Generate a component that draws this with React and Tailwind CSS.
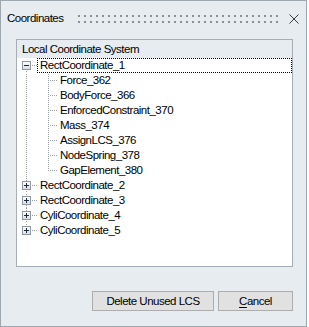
import React from "react";

const tree = [
  {
    name: "RectCoordinate_1",
    open: true,
    children: [
      "Force_362",
      "BodyForce_366",
      "EnforcedConstraint_370",
      "Mass_374",
      "AssignLCS_376",
      "NodeSpring_378",
      "GapElement_380",
    ],
  },
  { name: "RectCoordinate_2" },
  { name: "RectCoordinate_3" },
  { name: "CyliCoordinate_4" },
  { name: "CyliCoordinate_5" },
];

const DOT = "#9aa0a6";

function Expander({ open }) {
  return (
    <>
      <defs>
        <linearGradient id="exp" x1="0" y1="0" x2="0" y2="1">
          <stop offset="0" stopColor="#ffffff" />
          <stop offset="1" stopColor="#d9dde2" />
        </linearGradient>
      </defs>
      <rect x="5.5" y="3.5" width="8" height="8" fill="url(#exp)" stroke="#8e99a5" />
      <line x1="7" y1="7.5" x2="12" y2="7.5" stroke="#1e2b3a" />
      {!open && <line x1="9.5" y1="5" x2="9.5" y2="10" stroke="#1e2b3a" />}
    </>
  );
}

function RootRow({ node, first, last, selected, idx }) {
  return (
    <div className="flex h-[15px] leading-[13px]">
      <svg width="20" height="15" className="shrink-0" shapeRendering="crispEdges">
        {!first && (
          <line x1="9.5" y1="0" x2="9.5" y2="3" stroke={DOT} strokeDasharray="1 1" strokeDashoffset={idx % 2} />
        )}
        {!last && (
          <line x1="9.5" y1="12" x2="9.5" y2="15" stroke={DOT} strokeDasharray="1 1" strokeDashoffset={(idx + 1) % 2} />
        )}
        <line x1="15" y1="7.5" x2="20" y2="7.5" stroke={DOT} strokeDasharray="1 1" />
        <Expander open={node.open} />
      </svg>
      <span
        className={`flex-1 border border-dotted pl-[2px] ${
          selected ? "border-black" : "border-transparent"
        }`}
      >
        {node.name}
      </span>
    </div>
  );
}

function ChildRow({ name, last, idx }) {
  return (
    <div className="flex h-[15px] leading-[15px]">
      <svg width="43" height="15" className="shrink-0" shapeRendering="crispEdges">
        <line x1="9.5" y1="0" x2="9.5" y2="15" stroke={DOT} strokeDasharray="1 1" strokeDashoffset={idx % 2} />
        <line
          x1="31.5"
          y1="0"
          x2="31.5"
          y2={last ? 8 : 15}
          stroke={DOT}
          strokeDasharray="1 1"
          strokeDashoffset={idx % 2}
        />
        <line x1="32" y1="7.5" x2="40" y2="7.5" stroke={DOT} strokeDasharray="1 1" strokeDashoffset="1" />
      </svg>
      <span>{name}</span>
    </div>
  );
}

export default function App() {
  let idx = 0;
  const rows = [];
  tree.forEach((node, i) => {
    rows.push(
      <RootRow
        key={node.name}
        node={node}
        idx={idx++}
        first={i === 0}
        last={i === tree.length - 1}
        selected={i === 0}
      />
    );
    if (node.open) {
      node.children.forEach((c, j) => {
        rows.push(<ChildRow key={c} name={c} idx={idx++} last={j === node.children.length - 1} />);
      });
    }
  });

  return (
    <div className="w-[309px] h-[327px] bg-white">
      <div className="w-[307px] h-[327px] border border-[#9ea6ae] bg-[#e6ecf0] flex flex-col text-[11.5px] tracking-[-0.5px] text-black font-['Liberation_Sans',Arial,sans-serif]">
        {/* title bar */}
        <div className="h-[38px] flex items-start pt-[10px] pl-[6px]">
          <span className="w-[71px] leading-[14px]">Coordinates</span>
          <svg width="201" height="9" className="mt-[4px]">
            <defs>
              <pattern id="grip" width="6" height="6" patternUnits="userSpaceOnUse">
                <rect x="0" y="0" width="2" height="2" fill="#8b9096" />
              </pattern>
            </defs>
            <rect x="0" y="0" width="201" height="8" fill="url(#grip)" />
          </svg>
          <svg width="10" height="10" className="ml-[10px] mt-[3px]" viewBox="0 0 10 10">
            <path d="M0.5 0.5L9.5 9.5M9.5 0.5L0.5 9.5" stroke="#3c3c3c" strokeWidth="1" />
          </svg>
        </div>

        {/* tree panel */}
        <div className="ml-[15px] w-[277px] h-[228px] border border-[#a6adb4] flex flex-col">
          <div className="h-[18px] pt-[2px] pl-[5px] leading-[14px]">Local Coordinate System</div>
          <div className="flex-1 bg-white flex flex-col">{rows}</div>
        </div>

        {/* buttons */}
        <div className="mt-[24px] flex justify-end gap-[4px] mr-[13px]">
          <button className="w-[122px] h-[20px] border border-[#adadad] bg-[#e1e1e1] leading-[18px]">
            Delete Unused LCS
          </button>
          <button className="w-[75px] h-[20px] border border-[#adadad] bg-[#e1e1e1] leading-[18px]">
            <span className="underline underline-offset-[2px]">C</span>ancel
          </button>
        </div>
      </div>
    </div>
  );
}
